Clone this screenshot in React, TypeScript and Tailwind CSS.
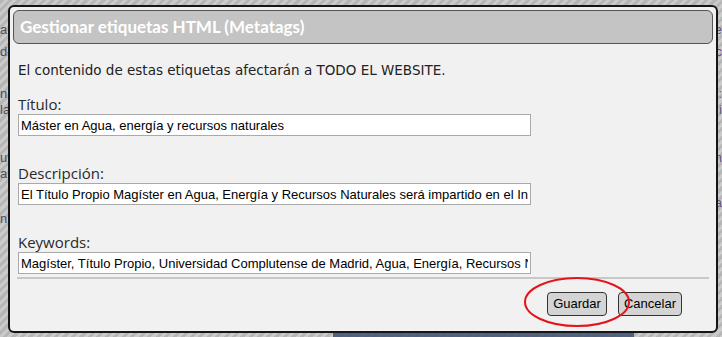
import React from 'react'

const bgRows = [
  { top: 'mt-[22px]', left: 'a e', right: 'e' },
  { top: 'mt-[7px]', left: 'de', right: 'c' },
  { top: 'mt-[27px]', left: 'n', right: 'c:' },
  { top: 'mt-[1px]', left: 'la', right: 'i' },
  { top: 'mt-[33px]', left: 'ut', right: 'n' },
  { top: 'mt-[1px]', left: 'a', right: '' },
  { top: 'mt-[14px]', left: '', right: 'a' },
  { top: 'mt-[1px]', left: 'n', right: '' },
]

function Field({ label, value }: { label: string; value: string }) {
  return (
    <div className="flex flex-col">
      <label className="text-[15px] leading-[18px] text-[#2a2a2a] font-['Open_Sans',sans-serif]">{label}</label>
      <input
        readOnly
        value={value}
        className="mt-[1px] w-[513px] h-[22px] border border-[#a9a9a9] bg-white px-[2px] text-[13px] text-black font-['Liberation_Sans',Arial,sans-serif] outline-none"
      />
    </div>
  )
}

export default function App() {
  return (
    <div className="relative w-[722px] h-[337px] overflow-hidden bg-white">
      {/* page behind the modal */}
      <div className="flex flex-col text-[13px] leading-[15px] font-['Liberation_Sans',Arial,sans-serif]">
        {bgRows.map((r, i) => (
          <div key={i} className={`${r.top} flex justify-between`}>
            <span className="text-[#3a3050]">{r.left}</span>
            <span className="text-[#6a3a8c]">{r.right}</span>
          </div>
        ))}
      </div>
      <div className="absolute left-[333px] top-[326px] w-[301px] h-[20px] bg-[#3c5a8e]" />

      {/* striped overlay */}
      <div className="absolute inset-0 bg-[repeating-linear-gradient(135deg,rgba(110,110,110,0.5)_0px,rgba(110,110,110,0.5)_3px,rgba(110,110,110,0.36)_3px,rgba(110,110,110,0.36)_6px)]" />

      {/* dialog */}
      <div className="absolute left-[8px] top-[5px] w-[710px] h-[328px] rounded-[6px] border-2 border-[#151515] bg-[#f1f1f1] p-[3px] flex flex-col">
        <div className="h-[34px] rounded-[6px] border border-[#555] bg-[#c4c4c4] px-[6px] flex items-center">
          <span className="text-white font-bold text-[17px] font-['Lato',sans-serif]">
            Gestionar etiquetas HTML (Metatags)
          </span>
        </div>

        <div className="px-[5px] flex flex-col">
          <p className="mt-[16px] text-[13.5px] leading-[20px] text-[#222] font-['DejaVu_Sans',sans-serif]">
            El contenido de estas etiquetas afectarán a TODO EL WEBSITE.
          </p>

          <div className="mt-[15px] flex flex-col gap-[28px]">
            <Field label="Título:" value="Máster en Agua, energía y recursos naturales" />
            <Field
              label="Descripción:"
              value="El Título Propio Magíster en Agua, Energía y Recursos Naturales será impartido en el Instituto"
            />
            <Field
              label="Keywords:"
              value="Magíster, Título Propio, Universidad Complutense de Madrid, Agua, Energía, Recursos Naturales"
            />
          </div>

          <div className="mt-[3px] h-[2px] bg-[#c8c8c8] w-[692px] -ml-[1px]" />

          <div className="mt-[13px] flex justify-end gap-[11px] pr-[26px]">
            <button className="h-[24px] w-[60px] rounded-[4px] border border-[#333] bg-[#d4d4d4] text-[13px] text-black font-['Liberation_Sans',Arial,sans-serif]">
              Guardar
            </button>
            <button className="h-[24px] w-[64px] rounded-[4px] border border-[#333] bg-[#d4d4d4] text-[13px] text-black font-['Liberation_Sans',Arial,sans-serif]">
              Cancelar
            </button>
          </div>
        </div>
      </div>

      {/* red annotation ellipse */}
      <svg className="absolute left-[520px] top-[274px]" width="116" height="58" viewBox="0 0 116 58">
        <ellipse cx="57" cy="28" rx="52" ry="24" fill="none" stroke="#e4141c" strokeWidth="2" />
      </svg>
    </div>
  )
}
